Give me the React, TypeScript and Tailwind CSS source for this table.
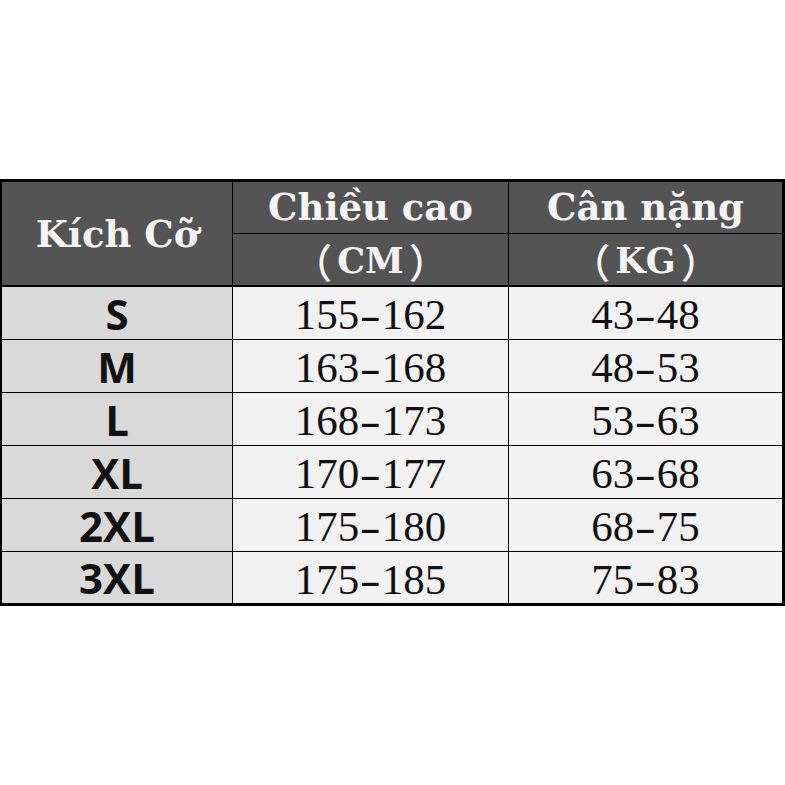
import React from "react";

const rows = [
  ["S", "155", "162", "43", "48"],
  ["M", "163", "168", "48", "53"],
  ["L", "168", "173", "53", "63"],
  ["XL", "170", "177", "63", "68"],
  ["2XL", "175", "180", "68", "75"],
  ["3XL", "175", "185", "75", "83"],
];

const serifHead = { fontFamily: '"DejaVu Serif", "Liberation Serif", serif' };
const cjk = { fontFamily: '"Noto Sans CJK SC", sans-serif' };

function Range({ a, b }: { a: string; b: string }) {
  return (
    <span className="whitespace-nowrap">
      {a}
      <span className="inline-block scale-x-[1.5] mx-[4px]">-</span>
      {b}
    </span>
  );
}

function Unit({ t }: { t: string }) {
  return (
    <span className="whitespace-nowrap flex items-center">
      <span className="font-medium text-[40px] mr-[5px] leading-none" style={cjk}>（</span>
      <span>{t}</span>
      <span className="font-medium text-[40px] ml-[5px] leading-none" style={cjk}>）</span>
    </span>
  );
}

export default function App() {
  return (
    <div className="w-[785px] h-[785px] bg-white flex flex-col">
      <div className="h-[179px]" />
      <div className="w-[785px] border-t-[3px] border-l-2 border-r-[3px] border-b-2 border-black bg-black flex flex-col">
        <div
          className="grid grid-cols-[230px_275px_273px] grid-rows-[51px_51px] gap-px bg-black text-[#f4f4f4] font-bold border-b-2 border-black"
          style={serifHead}
        >
          <div className="row-span-2 bg-[#545454] flex items-center justify-center text-[37px] pt-[3px]">
            Kích Cỡ
          </div>
          <div className="bg-[#545454] flex items-center justify-center text-[37px] pt-[1px]">
            Chiều cao
          </div>
          <div className="bg-[#545454] flex items-center justify-center text-[37px] pt-[1px]">
            Cân nặng
          </div>
          <div className="bg-[#545454] flex items-center justify-center text-[35px] pt-[3px]">
            <Unit t="CM" />
          </div>
          <div className="bg-[#545454] flex items-center justify-center text-[35px] pt-[3px]">
            <Unit t="KG" />
          </div>
        </div>
        <div className="grid grid-cols-[230px_275px_273px] auto-rows-[52px] gap-px bg-black">
          {rows.map((r, i) => (
            <React.Fragment key={i}>
              <div
                className={`bg-[#d9d9d9] flex items-center justify-center text-[42px] font-bold text-[#111] ${i === 5 ? "h-[51px]" : ""}`}
                style={{ fontFamily: '"Open Sans", "Noto Sans", sans-serif' }}
              >
                {r[0]}
              </div>
              <div
                className={`bg-[#f2f2f2] flex items-center justify-center text-[43px] text-[#111] pt-[5px] ${i === 5 ? "h-[51px]" : ""}`}
                style={{ fontFamily: '"Liberation Serif", serif' }}
              >
                <Range a={r[1]} b={r[2]} />
              </div>
              <div
                className={`bg-[#f2f2f2] flex items-center justify-center text-[43px] text-[#111] pt-[5px] ${i === 5 ? "h-[51px]" : ""}`}
                style={{ fontFamily: '"Liberation Serif", serif' }}
              >
                <Range a={r[3]} b={r[4]} />
              </div>
            </React.Fragment>
          ))}
        </div>
      </div>
    </div>
  );
}
